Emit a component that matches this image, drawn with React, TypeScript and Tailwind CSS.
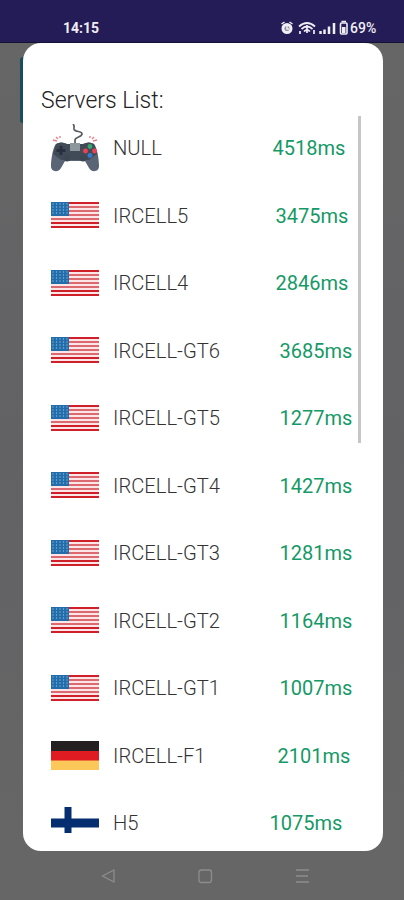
import React from 'react';

type Flag = 'gamepad' | 'us' | 'de' | 'fi';

interface Server {
  name: string;
  ping: string;
  flag: Flag;
  nameWidth: string;
}

const servers: Server[] = [
  { name: 'NULL', ping: '4518ms', flag: 'gamepad', nameWidth: 'w-[159.500px]' },
  { name: 'IRCELL5', ping: '3475ms', flag: 'us', nameWidth: 'w-[162.500px]' },
  { name: 'IRCELL4', ping: '2846ms', flag: 'us', nameWidth: 'w-[162.500px]' },
  { name: 'IRCELL-GT6', ping: '3685ms', flag: 'us', nameWidth: 'w-[166.500px]' },
  { name: 'IRCELL-GT5', ping: '1277ms', flag: 'us', nameWidth: 'w-[166.500px]' },
  { name: 'IRCELL-GT4', ping: '1427ms', flag: 'us', nameWidth: 'w-[166.500px]' },
  { name: 'IRCELL-GT3', ping: '1281ms', flag: 'us', nameWidth: 'w-[166.500px]' },
  { name: 'IRCELL-GT2', ping: '1164ms', flag: 'us', nameWidth: 'w-[166.500px]' },
  { name: 'IRCELL-GT1', ping: '1007ms', flag: 'us', nameWidth: 'w-[166.500px]' },
  { name: 'IRCELL-F1', ping: '2101ms', flag: 'de', nameWidth: 'w-[164.500px]' },
  { name: 'H5', ping: '1075ms', flag: 'fi', nameWidth: 'w-[156.500px]' },
];

function Gamepad() {
  return (
    <svg viewBox="0 0 48 48" className="h-12 w-12">
      <path d="M24 22v-6c0-3 7-3 7-6 0-4-7-1-8-5-.3-2 1-3-1-5" fill="none" stroke="#555b61" strokeWidth="1.700" />
      <path d="M2 16l4 1M5 13l2 2M9 12v2M46 16l-4 1M43 13l-2 2M39 12v2" stroke="#ee7f89" strokeWidth="1.400" />
      <path
        d="M5 20q5-3 11 0h16q6-3 11 0c3 3 5 15 5 22 0 6-7 7-10 2l-4-7H14l-4 7c-3 5-10 4-10-2 0-7 2-19 5-22z"
        fill="#596474"
      />
      <path d="M5 20q5-3 11 0h16q6-3 11 0l3 10-8 6H10l-8-6z" fill="#414b58" />
      <path d="M19 19h10v8H19z" fill="#8b999e" />
      <path d="M10 22v9M5.500 26.500h9" stroke="#28303e" strokeWidth="3" />
      <circle cx="16" cy="34" r="3.500" fill="#3c4755" />
      <circle cx="32" cy="34" r="3.500" fill="#3c4755" />
      <circle cx="39" cy="22.500" r="2.400" fill="#37a86b" />
      <circle cx="34.500" cy="27" r="2.400" fill="#ef4056" />
      <circle cx="43.500" cy="27" r="2.400" fill="#ef4056" />
      <circle cx="39" cy="31.500" r="2.400" fill="#3979ca" />
    </svg>
  );
}

function UsFlag() {
  return (
    <svg viewBox="0 0 48 26" className="h-[26px] w-12">
      <rect width="48" height="26" fill="#fbe5e7" />
      {[0, 4, 8, 12, 16, 20, 24].map((y) => (
        <rect key={y} y={y} width="48" height="2" fill={y === 0 || y > 18 ? '#cf2029' : '#dc6870'} />
      ))}
      <rect width="18" height="14" fill="#226da9" />
      {[2, 5, 8, 11].map((y) =>
        [2, 5.5, 9, 12.5, 16].map((x) => (
          <circle key={`${x}-${y}`} cx={x} cy={y} r=".700" fill="#83b9df" />
        )),
      )}
    </svg>
  );
}

function FlagIcon({ flag }: { flag: Flag }) {
  if (flag === 'gamepad') return <Gamepad />;
  if (flag === 'us') return <UsFlag />;
  if (flag === 'de') {
    return (
      <svg viewBox="0 0 48 29" className="h-[29px] w-12">
        <rect width="48" height="10" fill="#241f21" />
        <rect y="10" width="48" height="10" fill="#e01b22" />
        <rect y="19.500" width="48" height="9.500" fill="#fcc859" />
      </svg>
    );
  }
  return (
    <svg viewBox="0 0 48 26" className="mb-[6px] h-[26px] w-12">
      <path d="M0 11.500h13.500V0h7v11.500H48v9H20.500V26h-7v-5.500H0z" fill="#052e70" />
    </svg>
  );
}

function StatusBar() {
  return (
    <header className="flex h-[43px] items-end border-b border-[#151134] bg-[#241c56] pb-1.5 text-[#f0edf5]">
      <span className="ml-[63px] text-[14px] leading-4 font-bold">14:15</span>
      <svg viewBox="0 0 70 16" className="ml-auto h-4 w-[70px]" fill="none" stroke="currentColor">
        <circle cx="7" cy="8.500" r="4" strokeWidth="3" fill="#8d88a4" />
        <path d="M1.500 4l3-2M9.500 2l3 2M7 6v3h2" strokeWidth="1.500" />
        <path
          d="M19 6.500q8-7 16 0M21.500 9q5.500-5 11 0M24 11.500q3-3 6 0M20 11v3M34 10v4M27 5v8"
          strokeWidth="1.700"
        />
        <path d="M40.500 11v3M44.500 9.500V14M49 6.500V14M54 3v11" strokeWidth="2.500" />
        <rect x="60.500" y="3" width="6.500" height="11" rx="1" strokeWidth="1.600" />
        <path d="M61.500 1.500H66" strokeWidth="1.500" />
        <rect x="62" y="7" width="3.500" height="6" fill="currentColor" stroke="none" />
      </svg>
      <span className="mr-[26px] w-[28px] text-[14px] leading-4 font-medium">69%</span>
    </header>
  );
}

function NavBar() {
  return (
    <nav className="flex h-[49px] items-center justify-center bg-[#666] text-[#8d8d8d]">
      <svg viewBox="0 0 220 20" className="h-5 w-[220px]" fill="none" stroke="currentColor" strokeWidth="1.300">
        <path d="M22 4v12L10.500 10z" />
        <rect x="107" y="4" width="12.500" height="12.500" rx="2.500" />
        <path d="M204 4h13M204 10h12M204 16h13" />
      </svg>
    </nav>
  );
}

export default function App() {
  return (
    <main className="flex h-[900px] w-[404px] flex-col overflow-hidden bg-[#666] font-[Roboto,sans-serif]">
      <StatusBar />
      <div className="flex h-[808px] bg-linear-to-b from-[#666] via-[#626265] to-[#666]">
        <div className="mt-[14px] ml-5 h-[66px] w-[3px] rounded-l bg-[#164e5b]" />
        <section className="flex w-[360px] flex-col overflow-hidden rounded-[18px] bg-white">
          <h1 className="mt-[44px] ml-[18px] h-[27px] shrink-0 text-[23px] leading-7 font-light text-[#222]">
            Servers List:
          </h1>
          <div className="flex items-start">
            <ul className="w-[335px]">
              {servers.map((server) => (
                <li key={server.name} className="flex h-[67.500px] items-center pl-7">
                  <FlagIcon flag={server.flag} />
                  <span
                    className={`ml-[14px] shrink-0 pt-px text-[20.200px] leading-6 font-light text-[#333] ${server.nameWidth}`}
                  >
                    {server.name}
                  </span>
                  <span className="pt-px text-[20px] leading-6 text-[#159966]">{server.ping}</span>
                </li>
              ))}
            </ul>
            <div className="mt-[2px] h-[327px] w-[2.500px] bg-[#c6c6c6]" />
          </div>
        </section>
      </div>
      <NavBar />
    </main>
  );
}
